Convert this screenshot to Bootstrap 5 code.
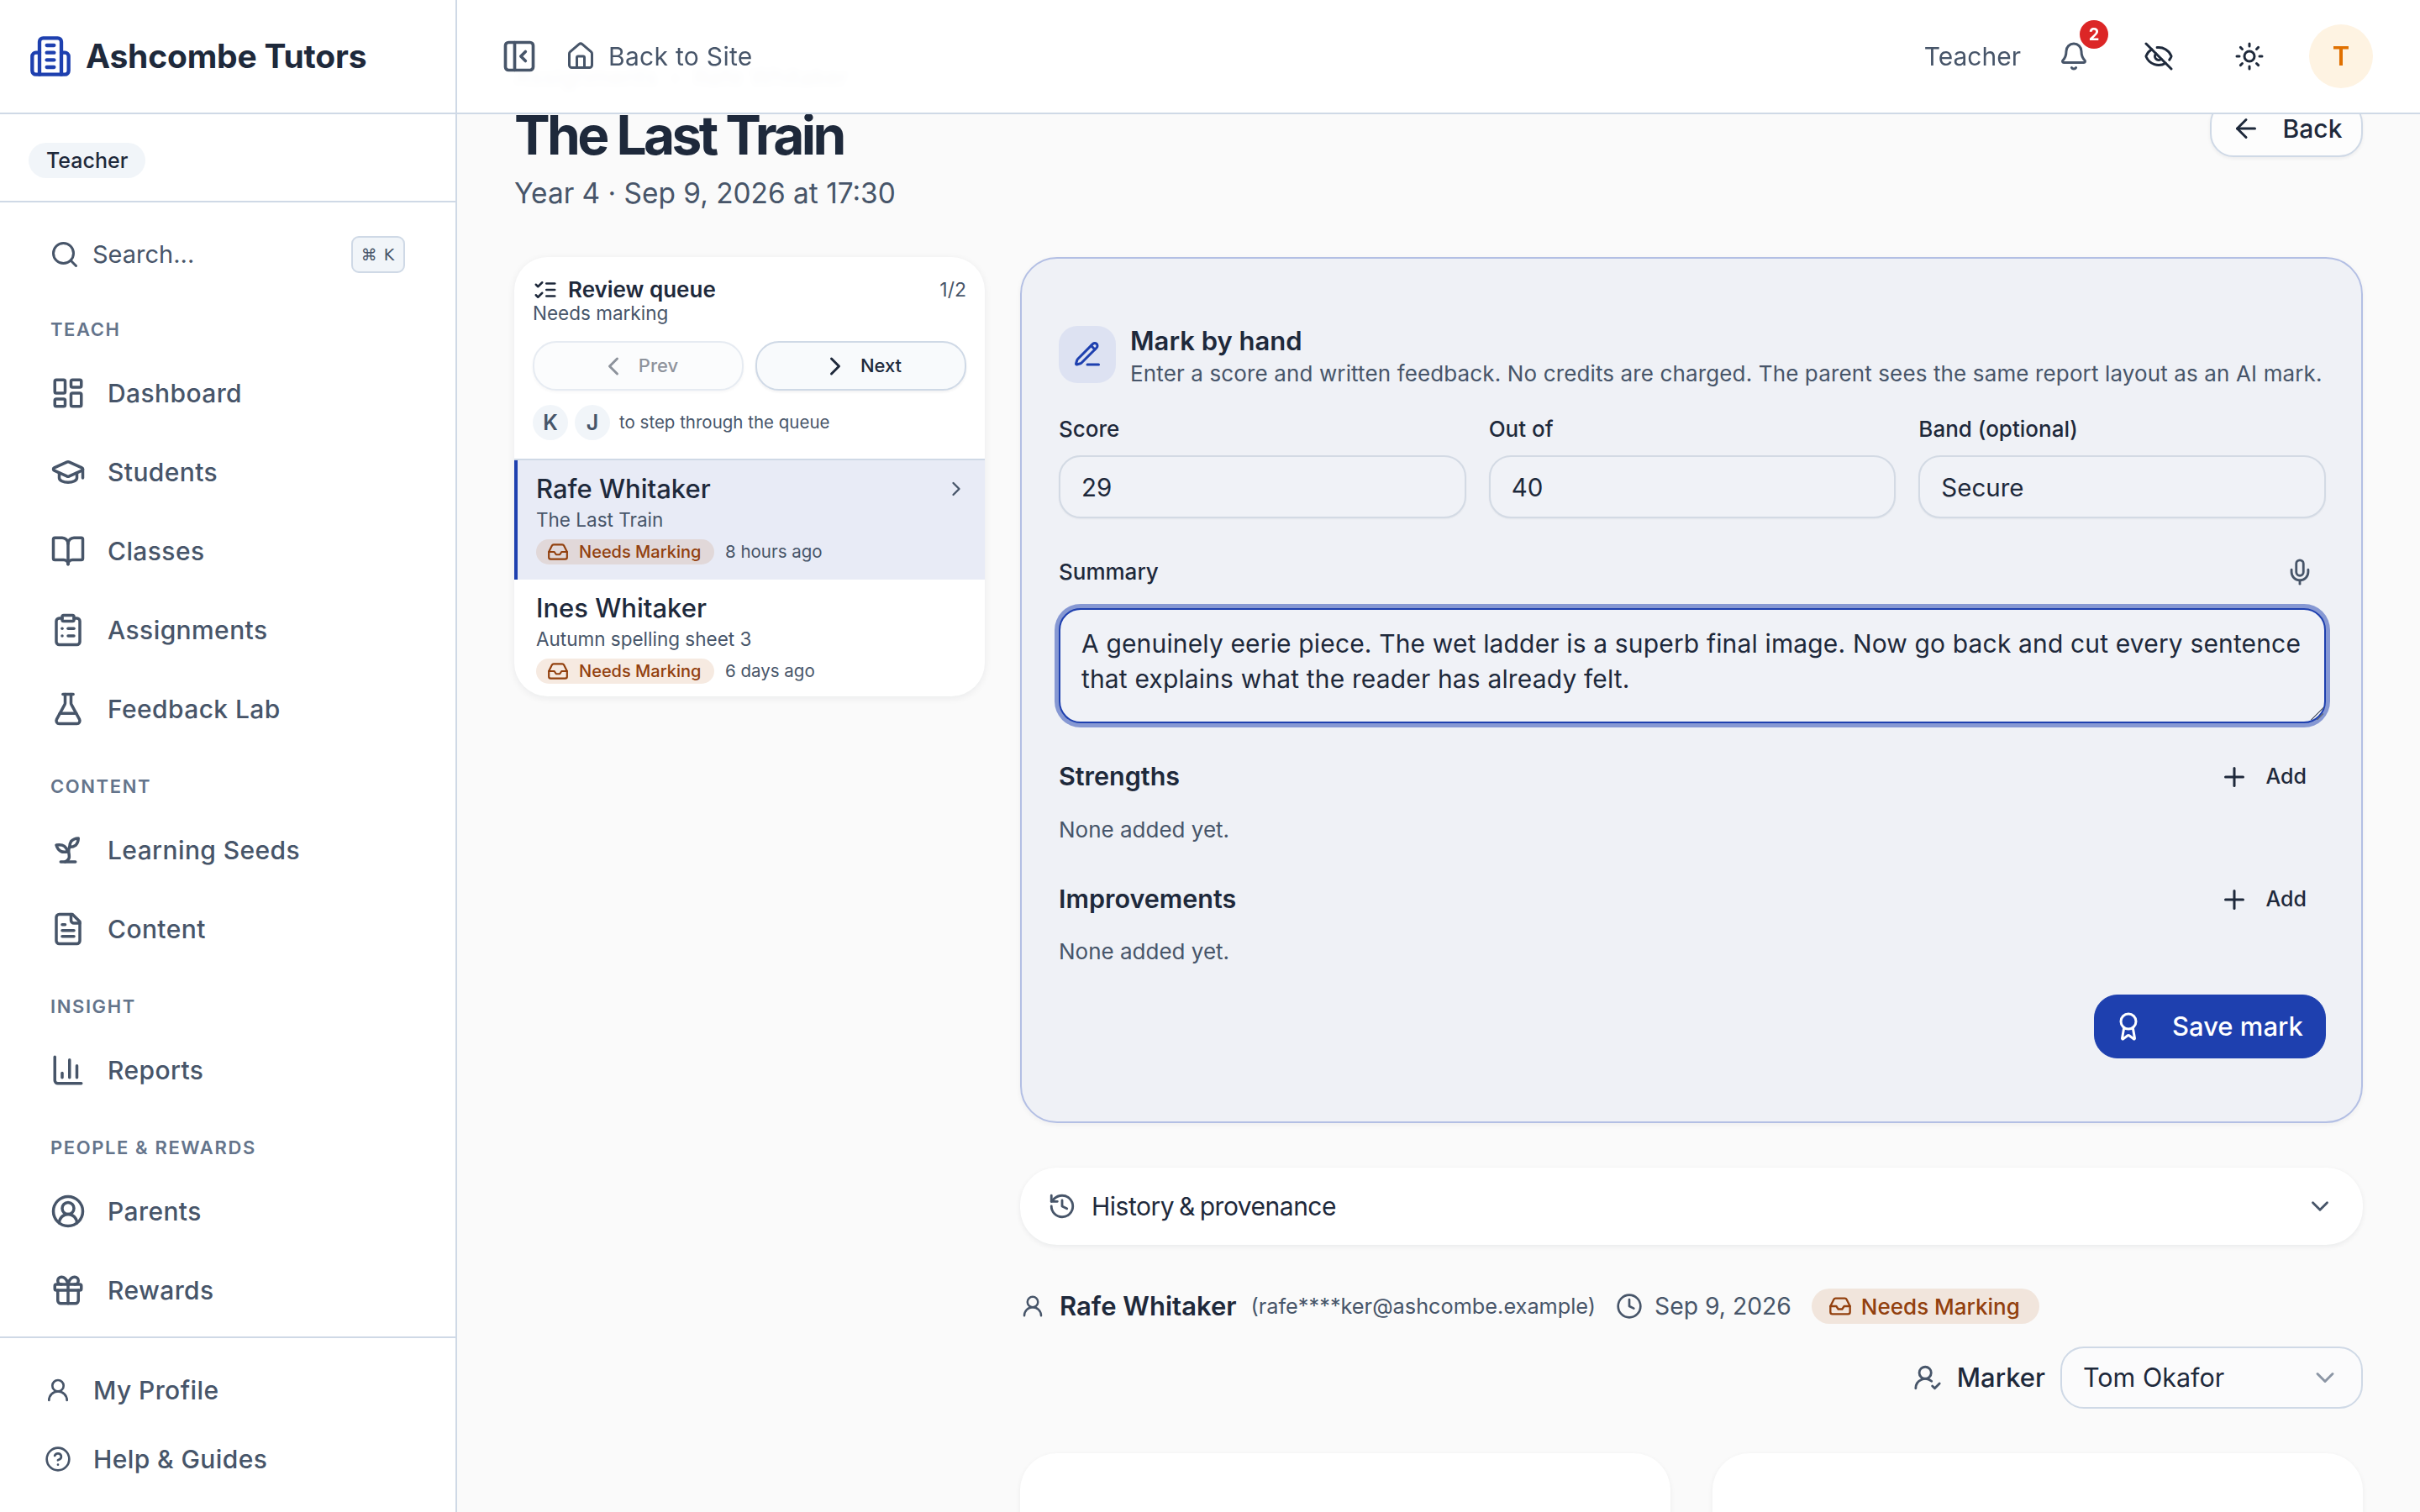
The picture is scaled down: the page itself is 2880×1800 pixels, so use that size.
<!DOCTYPE html>
<html lang="en">
<head>
<meta charset="utf-8">
<title>The Last Train</title>
<link rel="stylesheet" href="https://cdn.jsdelivr.net/npm/bootstrap@5.3.0/dist/css/bootstrap.min.css">
<style>
:root{--ink:#1e293b;--mute:#475569;--line:#cfd9e6;--blue:#1e40af}
html,body{height:1800px;overflow:hidden}
body{font-family:Inter,"Noto Sans",sans-serif;background:#fafafa;color:var(--ink);font-size:32px}
.ic{fill:none;stroke:currentColor;stroke-width:2;stroke-linecap:round;stroke-linejoin:round;flex:none;display:block}
.ax-ic-blue{color:var(--blue)}
.ax-ic-mute{color:var(--mute)}
.ax-shell{height:1800px}
.ax-side{width:544px;flex:none;background:#fff;border-right:2px solid var(--line);height:1800px}
.ax-brand{height:136px;border-bottom:2px solid var(--line);padding-left:34px;gap:16px}
.ax-brand-name{font-size:39px;font-weight:700;letter-spacing:-.2px}
.ax-role-wrap{height:105px;padding:34px 0 0 34px;border-bottom:2px solid var(--line)}
.ax-role{display:block;width:fit-content;height:42px;line-height:42px;padding:0 21px;border-radius:21px;background:#f1f5f9;font-size:25px;font-weight:500;color:var(--ink)}
.ax-scroll{padding-top:20px;height:1352px;border-bottom:2px solid var(--line)}
.ax-search{height:84px;padding-left:59px;padding-right:60px;margin-bottom:18px;color:var(--mute);gap:15px;font-size:29px}
.ax-kbd{width:64px;height:44px;border:2px solid var(--line);border-radius:9px;background:#f1f5f9;font-size:19px;font-family:"DejaVu Sans",sans-serif;line-height:40px;text-align:center;letter-spacing:1px}
.ax-label{height:58px;line-height:58px;padding-left:60px;font-size:22px;font-weight:600;letter-spacing:1.6px;color:#64748b}
.ax-group{margin-top:16px}
.ax-link{height:94px;padding:0 0 0 60px;gap:26px;color:var(--mute);font-size:30px;font-weight:500;letter-spacing:.4px}
.ax-foot{padding-top:21px}
.ax-foot .ax-link{height:82px;padding-left:53px;gap:26px}
.ax-main{min-width:0;height:1800px;overflow:hidden;position:relative}
.ax-top{height:136px;background:rgba(255,255,255,.97);backdrop-filter:blur(4px);border-bottom:2px solid var(--line);padding:0 56px 0 52px;position:relative;z-index:10}
.ax-back-site{color:var(--mute);margin-left:33px;gap:15px;font-size:30px;letter-spacing:.3px;line-height:1}
.ax-top-role{color:var(--mute);font-size:30px;margin-right:45px;line-height:1}
.ax-top-btn{width:36px;height:36px;position:relative}
.ax-top-eye{margin-left:65px}
.ax-top-sun{margin-left:72px}
.ax-notify{position:absolute;left:25px;top:-25px;width:34px;height:34px;border-radius:50%;background:#dc2626;color:#fff;font-size:20px;font-weight:700;line-height:34px;text-align:center}
.ax-avatar{width:76px;height:76px;margin-left:53px;border-radius:50%;background:#fef3e2;color:#e07000;font-size:31px;font-weight:600;line-height:76px;text-align:center}
.ax-page{margin-top:-70px;padding:0 68px}
.ax-crumb{height:53px;padding-top:16px;line-height:20px;font-size:28px;color:var(--mute)}
.ax-title{font-size:64px;line-height:64px;font-weight:700;letter-spacing:-3.6px;margin:10px 0 15px;color:var(--ink)}
.ax-sub{font-size:33.4px;line-height:44px;color:var(--mute)}
.ax-back{height:68px;width:182px;border:2px solid var(--line);border-radius:28px;background:#fdfdfd;color:var(--ink);font-size:30px;font-weight:500;gap:26px;box-shadow:0 2px 4px rgba(15,23,42,.06);padding:0}
.ax-cols{margin-top:54px;gap:42px}
.ax-left{width:560px;flex:none}
.ax-right{min-width:0;flex:1}
.ax-queue{border:0;border-radius:40px;background:#fff;overflow:hidden;box-shadow:0 2px 10px rgba(15,23,42,.07)}
.ax-qhead{padding:23px 22px 22px;border-bottom:2px solid var(--line)}
.ax-qtitle{font-size:26px;font-weight:600;line-height:32px;gap:12px}
.ax-qcount{font-size:23px;line-height:32px;color:var(--mute)}
.ax-qsub{font-size:22.5px;line-height:30px;margin-top:-3px;color:var(--mute)}
.ax-steps{margin-top:18px;gap:14px}
.ax-step{flex:1;height:59px;border-radius:28px;border:2px solid var(--line);background:#f8fafc;color:var(--ink);font-size:22px;font-weight:500;gap:12px;padding:0;box-shadow:0 2px 3px rgba(15,23,42,.06)}
.ax-step.disabled,.ax-step:disabled{opacity:.5;background:#f8fafc;border-color:var(--line);color:var(--ink)}
.ax-keys{margin-top:17px;gap:8px;font-size:20.5px;color:var(--mute)}
.ax-key{width:42px;height:42px;border-radius:50%;background:#f1f5f9;font-size:25px;font-weight:600;line-height:42px;text-align:center;color:var(--mute)}
.ax-keys-txt{margin-left:3px}
.ax-row{padding:14px 26px 15px}
.ax-row.on{background:#e8ebf6;border-left:4px solid var(--blue);padding:14px 20px 18px 22px}
.ax-row-name{font-size:31px;line-height:40px;font-weight:500;color:var(--ink)}
.ax-row-sub{font-size:22.5px;line-height:34px;color:var(--mute)}
.ax-row-meta{margin-top:6px;gap:13px;font-size:20.5px;line-height:30px;color:var(--mute)}
.ax-pill{background:rgba(180,83,9,.12);color:#92400e;border-radius:18px;font-weight:500;display:inline-flex;align-items:center}
.ax-pill-sm{height:30px;width:212px;font-size:20px;padding:0 13px;gap:12px}
.ax-pill-lg{height:42px;font-size:26px;padding:0 23px 0 20px;gap:11px;margin-left:24px;border-radius:21px}
.ax-panel{height:1031px;border:2px solid #b3bfe4;border-radius:44px;background:#eff1f6;padding:80px 42px 0 44px;box-shadow:0 2px 6px rgba(15,23,42,.05)}
.ax-head{gap:17px}
.ax-mark-ic{width:68px;height:68px;border-radius:22px;background:#dde2f2;color:var(--blue);flex:none}
.ax-mark-t{font-size:31px;line-height:36px;font-weight:600}
.ax-mark-s{font-size:26px;line-height:36px;margin-top:3px;letter-spacing:.13px;white-space:nowrap;color:var(--mute)}
.ax-fields{display:grid;grid-template-columns:repeat(3,1fr);gap:0 27px;margin-top:31px}
.ax-lab{display:block;font-size:26px;line-height:34px;font-weight:500;margin:0 0 14px;color:var(--ink)}
.ax-inp{height:75px;border:2px solid #d3dae4;border-radius:26px;background:#f0f2f7;font-size:29.5px;color:var(--ink);padding:0 25px;box-shadow:0 1px 2px rgba(15,23,42,.05)}
.ax-sumhead{margin-top:47px;height:34px;color:var(--ink)}
.ax-sumhead .ax-lab{margin:0}
.ax-mic{margin-right:14px;color:var(--mute)}
.ax-textwrap{position:relative;margin-top:26px}
.ax-textwrap::after{content:"";position:absolute;right:3px;bottom:4px;width:15px;height:15px;background:linear-gradient(135deg,transparent 50%,#6b7280 50%,#6b7280 56%,transparent 56%,transparent 72%,#6b7280 72%,#6b7280 78%,transparent 78%);pointer-events:none}
.ax-text{display:block;width:100%;height:137px;border:2px solid var(--blue);border-radius:26px;background:#f0f2f7;font-size:30px;letter-spacing:.15px;line-height:41.5px;color:var(--ink);padding:20px 10px 0 25px;box-shadow:0 0 0 5px rgba(30,64,175,.5);resize:none;white-space:pre-wrap;outline:0}
.ax-text:focus{border-color:var(--blue);background:#f0f2f7;box-shadow:0 0 0 5px rgba(30,64,175,.5)}
.ax-sect{height:44px;font-size:30.5px;font-weight:600}
.ax-add{gap:20px;font-size:25px;font-weight:500;color:var(--ink);padding:2px 23px 0 0;border:0;background:none}
.ax-none{font-size:26px;line-height:36px;color:var(--mute)}
.ax-s1{margin-top:41px}.ax-n1{margin-top:24px}.ax-s2{margin-top:42px}.ax-n2{margin-top:23px}
.ax-save{margin-top:33px;height:76px;width:276px;margin-left:auto;border-radius:28px;background:var(--blue);border-color:var(--blue);color:#fff;font-size:31px;font-weight:500;padding:0 0 0 22px;gap:34px}
.ax-hist{margin-top:53px;height:92px;border-radius:44px;background:#fff;padding:0 34px 0 33px;box-shadow:0 2px 6px rgba(15,23,42,.07);font-size:30px;color:var(--ink);letter-spacing:-.5px;word-spacing:-2px;gap:18px}
.ax-info{margin-top:52px;height:42px;color:var(--mute)}
.ax-info-name{font-size:31px;font-weight:600;color:var(--ink);margin-left:17px}
.ax-info-mail{font-size:25.3px;margin-left:17px}
.ax-info-clock{margin-left:24px}
.ax-info-date{font-size:28.3px;margin-left:14px}
.ax-mark{margin-top:27px;gap:18px;justify-content:flex-end}
.ax-mark-lab{font-size:31px;font-weight:500;color:var(--ink)}
.ax-sel{width:360px;height:74px;border:2px solid var(--line);border-radius:28px;background-color:#fbfbfc;font-size:30.5px;color:var(--ink);padding:0 60px 0 25px;background-image:url("data:image/svg+xml,%3csvg xmlns='http://www.w3.org/2000/svg' viewBox='0 0 24 24' fill='none' stroke='%238c96a5' stroke-width='2' stroke-linecap='round' stroke-linejoin='round'%3e%3cpath d='m6 9 6 6 6-6'/%3e%3c/svg%3e");background-position:right 25px center;background-size:36px 36px}
.ax-cards{margin-top:53px;gap:50px}
.ax-blank{flex:1;height:200px;border:0;border-radius:44px;background:#fff;box-shadow:0 2px 6px rgba(15,23,42,.06)}
</style>
</head>
<body>
<svg width="0" height="0" class="position-absolute">
<defs>
<symbol id="i-building" viewBox="0 0 24 24"><path d="M6 22V4a2 2 0 0 1 2-2h8a2 2 0 0 1 2 2v18Z"/><path d="M6 10H4a2 2 0 0 0-2 2v8a2 2 0 0 0 2 2h2"/><path d="M18 10h2a2 2 0 0 1 2 2v8a2 2 0 0 1-2 2h-2"/><path d="M10 6h4"/><path d="M10 10h4"/><path d="M10 14h4"/><path d="M10 18h4"/></symbol>
<symbol id="i-panel" viewBox="0 0 24 24"><rect width="18" height="18" x="3" y="3" rx="2"/><path d="M9 3v18"/><path d="m16 15-3-3 3-3"/></symbol>
<symbol id="i-house" viewBox="0 0 24 24"><path d="M15 21v-8a1 1 0 0 0-1-1h-4a1 1 0 0 0-1 1v8"/><path d="M3 10a2 2 0 0 1 .709-1.528l7-5.999a2 2 0 0 1 2.582 0l7 5.999A2 2 0 0 1 21 10v9a2 2 0 0 1-2 2H5a2 2 0 0 1-2-2z"/></symbol>
<symbol id="i-bell" viewBox="0 0 24 24"><path d="M10.268 21a2 2 0 0 0 3.464 0"/><path d="M3.262 15.326A1 1 0 0 0 4 17h16a1 1 0 0 0 .74-1.673C19.41 13.956 18 12.499 18 8A6 6 0 0 0 6 8c0 4.499-1.411 5.956-2.738 7.326"/></symbol>
<symbol id="i-eyeoff" viewBox="0 0 24 24"><path d="M10.733 5.076a10.744 10.744 0 0 1 11.205 6.575 1 1 0 0 1 0 .696 10.747 10.747 0 0 1-1.444 2.49"/><path d="M14.084 14.158a3 3 0 0 1-4.242-4.242"/><path d="M17.479 17.499a10.75 10.75 0 0 1-15.417-5.151 1 1 0 0 1 0-.696 10.75 10.75 0 0 1 4.446-5.143"/><path d="m2 2 20 20"/></symbol>
<symbol id="i-sun" viewBox="0 0 24 24"><circle cx="12" cy="12" r="4"/><path d="M12 2v2"/><path d="M12 20v2"/><path d="m4.93 4.93 1.41 1.41"/><path d="m17.66 17.66 1.41 1.41"/><path d="M2 12h2"/><path d="M20 12h2"/><path d="m6.34 17.66-1.41 1.41"/><path d="m19.07 4.93-1.41 1.41"/></symbol>
<symbol id="i-search" viewBox="0 0 24 24"><circle cx="11" cy="11" r="8"/><path d="m21 21-4.3-4.3"/></symbol>
<symbol id="i-dash" viewBox="0 0 24 24"><rect width="7" height="9" x="3" y="3" rx="1"/><rect width="7" height="5" x="14" y="3" rx="1"/><rect width="7" height="9" x="14" y="12" rx="1"/><rect width="7" height="5" x="3" y="16" rx="1"/></symbol>
<symbol id="i-cap" viewBox="0 0 24 24"><path d="M21.42 10.922a1 1 0 0 0-.019-1.838L12.83 5.18a2 2 0 0 0-1.66 0L2.6 9.08a1 1 0 0 0 0 1.832l8.57 3.908a2 2 0 0 0 1.66 0z"/><path d="M22 10v6"/><path d="M6 12.5V16a6 3 0 0 0 12 0v-3.5"/></symbol>
<symbol id="i-book" viewBox="0 0 24 24"><path d="M12 7v14"/><path d="M3 18a1 1 0 0 1-1-1V4a1 1 0 0 1 1-1h5a4 4 0 0 1 4 4 4 4 0 0 1 4-4h5a1 1 0 0 1 1 1v13a1 1 0 0 1-1 1h-6a3 3 0 0 0-3 3 3 3 0 0 0-3-3z"/></symbol>
<symbol id="i-clip" viewBox="0 0 24 24"><rect width="8" height="4" x="8" y="2" rx="1"/><path d="M16 4h2a2 2 0 0 1 2 2v14a2 2 0 0 1-2 2H6a2 2 0 0 1-2-2V6a2 2 0 0 1 2-2h2"/><path d="M12 11h4"/><path d="M12 16h4"/><path d="M8 11h.01"/><path d="M8 16h.01"/></symbol>
<symbol id="i-flask" viewBox="0 0 24 24"><path d="M14 2v6a2 2 0 0 0 .245.96l5.51 10.08A2 2 0 0 1 18 22H6a2 2 0 0 1-1.755-2.96l5.51-10.08A2 2 0 0 0 10 8V2"/><path d="M6.453 15h11.094"/><path d="M8.5 2h7"/></symbol>
<symbol id="i-sprout" viewBox="0 0 24 24"><path d="M7 20h10"/><path d="M10 20c5.5-2.5.8-6.4 3-10"/><path d="M9.5 9.4c1.1.8 1.8 2.2 2.3 3.7-2 .4-3.5.4-4.8-.3-1.2-.6-2.3-1.9-3-4.2 2.8-.5 4.4 0 5.5.8z"/><path d="M14.1 6a7 7 0 0 0-1.1 4c1.9-.1 3.3-.6 4.3-1.4 1-1 1.6-2.3 1.7-4.6-2.7.1-4 1-4.9 2z"/></symbol>
<symbol id="i-file" viewBox="0 0 24 24"><path d="M15 2H6a2 2 0 0 0-2 2v16a2 2 0 0 0 2 2h12a2 2 0 0 0 2-2V7Z"/><path d="M14 2v4a2 2 0 0 0 2 2h4"/><path d="M10 9H8"/><path d="M16 13H8"/><path d="M16 17H8"/></symbol>
<symbol id="i-chart" viewBox="0 0 24 24"><path d="M3 3v16a2 2 0 0 0 2 2h16"/><path d="M18 17V9"/><path d="M13 17V5"/><path d="M8 17v-3"/></symbol>
<symbol id="i-cuser" viewBox="0 0 24 24"><path d="M18 20a6 6 0 0 0-12 0"/><circle cx="12" cy="10" r="4"/><circle cx="12" cy="12" r="10"/></symbol>
<symbol id="i-gift" viewBox="0 0 24 24"><rect x="3" y="8" width="18" height="4" rx="1"/><path d="M12 8v13"/><path d="M19 12v7a2 2 0 0 1-2 2H7a2 2 0 0 1-2-2v-7"/><path d="M7.5 8a2.5 2.5 0 0 1 0-5A4.8 8 0 0 1 12 8a4.8 8 0 0 1 4.5-5 2.5 2.5 0 0 1 0 5"/></symbol>
<symbol id="i-user" viewBox="0 0 24 24"><circle cx="12" cy="8" r="5"/><path d="M20 21a8 8 0 0 0-16 0"/></symbol>
<symbol id="i-help" viewBox="0 0 24 24"><circle cx="12" cy="12" r="10"/><path d="M9.09 9a3 3 0 0 1 5.83 1c0 2-3 3-3 3"/><path d="M12 17h.01"/></symbol>
<symbol id="i-list" viewBox="0 0 24 24"><path d="m3 17 2 2 4-4"/><path d="m3 7 2 2 4-4"/><path d="M13 6h8"/><path d="M13 12h8"/><path d="M13 18h8"/></symbol>
<symbol id="i-left" viewBox="0 0 24 24"><path d="m15 18-6-6 6-6"/></symbol>
<symbol id="i-right" viewBox="0 0 24 24"><path d="m9 18 6-6-6-6"/></symbol>
<symbol id="i-down" viewBox="0 0 24 24"><path d="m6 9 6 6 6-6"/></symbol>
<symbol id="i-inbox" viewBox="0 0 24 24"><polyline points="22 12 16 12 14 15 10 15 8 12 2 12"/><path d="M5.45 5.11 2 12v6a2 2 0 0 0 2 2h16a2 2 0 0 0 2-2v-6l-3.45-6.89A2 2 0 0 0 16.76 4H7.24a2 2 0 0 0-1.79 1.11z"/></symbol>
<symbol id="i-pencil" viewBox="0 0 24 24"><path d="M12 20h9"/><path d="M16.376 3.622a1 1 0 0 1 3.002 3.002L7.368 18.635a2 2 0 0 1-.855.506l-2.872.838a.5.5 0 0 1-.62-.62l.838-2.872a2 2 0 0 1 .506-.854z"/><path d="m15 5 3 3"/></symbol>
<symbol id="i-mic" viewBox="0 0 24 24"><path d="M12 19v3"/><path d="M19 10v2a7 7 0 0 1-14 0v-2"/><rect x="9" y="2" width="6" height="13" rx="3"/></symbol>
<symbol id="i-plus" viewBox="0 0 24 24"><path d="M5 12h14"/><path d="M12 5v14"/></symbol>
<symbol id="i-award" viewBox="0 0 24 24"><path d="m15.477 12.89 1.515 8.526a.5.5 0 0 1-.81.47l-3.58-2.687a1 1 0 0 0-1.197 0l-3.586 2.686a.5.5 0 0 1-.81-.469l1.514-8.526"/><circle cx="12" cy="8" r="6"/></symbol>
<symbol id="i-history" viewBox="0 0 24 24"><path d="M3 12a9 9 0 1 0 9-9 9.75 9.75 0 0 0-6.74 2.74L3 8"/><path d="M3 3v5h5"/><path d="M12 7v5l4 2"/></symbol>
<symbol id="i-clock" viewBox="0 0 24 24"><circle cx="12" cy="12" r="10"/><path d="M12 6v6l4 2"/></symbol>
<symbol id="i-ucheck" viewBox="0 0 24 24"><path d="M2 21a8 8 0 0 1 13.292-6"/><circle cx="10" cy="8" r="5"/><path d="m16 19 2 2 4-4"/></symbol>
<symbol id="i-arrow" viewBox="0 0 24 24"><path d="m12 19-7-7 7-7"/><path d="M19 12H5"/></symbol>
</defs>
</svg>

<div class="ax-shell d-flex">
  <aside class="ax-side d-flex flex-column">
    <div class="ax-brand d-flex align-items-center">
      <svg class="ic ax-ic-blue" width="52" height="52"><use href="#i-building"/></svg>
      <span class="ax-brand-name">Ashcombe Tutors</span>
    </div>
    <div class="ax-role-wrap"><span class="ax-role">Teacher</span></div>
    <div class="ax-scroll">
      <div class="ax-search d-flex align-items-center">
        <svg class="ic" width="36" height="36"><use href="#i-search"/></svg>
        <span class="flex-grow-1">Search...</span>
        <span class="ax-kbd">⌘ K</span>
      </div>
      <div class="ax-label">TEACH</div>
      <nav class="nav flex-column">
        <a class="nav-link ax-link d-flex align-items-center" href="#"><svg class="ic" width="42" height="42"><use href="#i-dash"/></svg>Dashboard</a>
        <a class="nav-link ax-link d-flex align-items-center" href="#"><svg class="ic" width="42" height="42"><use href="#i-cap"/></svg>Students</a>
        <a class="nav-link ax-link d-flex align-items-center" href="#"><svg class="ic" width="42" height="42"><use href="#i-book"/></svg>Classes</a>
        <a class="nav-link ax-link d-flex align-items-center" href="#"><svg class="ic" width="42" height="42"><use href="#i-clip"/></svg>Assignments</a>
        <a class="nav-link ax-link d-flex align-items-center" href="#"><svg class="ic" width="42" height="42"><use href="#i-flask"/></svg>Feedback Lab</a>
      </nav>
      <div class="ax-group">
        <div class="ax-label">CONTENT</div>
        <nav class="nav flex-column">
          <a class="nav-link ax-link d-flex align-items-center" href="#"><svg class="ic" width="42" height="42"><use href="#i-sprout"/></svg>Learning Seeds</a>
          <a class="nav-link ax-link d-flex align-items-center" href="#"><svg class="ic" width="42" height="42"><use href="#i-file"/></svg>Content</a>
        </nav>
      </div>
      <div class="ax-group">
        <div class="ax-label">INSIGHT</div>
        <nav class="nav flex-column">
          <a class="nav-link ax-link d-flex align-items-center" href="#"><svg class="ic" width="42" height="42"><use href="#i-chart"/></svg>Reports</a>
        </nav>
      </div>
      <div class="ax-group">
        <div class="ax-label">PEOPLE &amp; REWARDS</div>
        <nav class="nav flex-column">
          <a class="nav-link ax-link d-flex align-items-center" href="#"><svg class="ic" width="42" height="42"><use href="#i-cuser"/></svg>Parents</a>
          <a class="nav-link ax-link d-flex align-items-center" href="#"><svg class="ic" width="42" height="42"><use href="#i-gift"/></svg>Rewards</a>
        </nav>
      </div>
    </div>
    <nav class="ax-foot nav flex-column">
      <a class="nav-link ax-link d-flex align-items-center" href="#"><svg class="ic" width="32" height="32"><use href="#i-user"/></svg>My Profile</a>
      <a class="nav-link ax-link d-flex align-items-center" href="#"><svg class="ic" width="32" height="32"><use href="#i-help"/></svg>Help &amp; Guides</a>
    </nav>
  </aside>

  <div class="ax-main flex-grow-1">
    <header class="ax-top d-flex align-items-center">
      <svg class="ic ax-ic-mute" width="44" height="44"><use href="#i-panel"/></svg>
      <a class="ax-back-site d-flex align-items-center text-decoration-none" href="#"><svg class="ic" width="36" height="36"><use href="#i-house"/></svg>Back to Site</a>
      <div class="ms-auto d-flex align-items-center">
        <span class="ax-top-role">Teacher</span>
        <div class="ax-top-btn ax-ic-mute"><svg class="ic" width="36" height="36"><use href="#i-bell"/></svg><span class="ax-notify">2</span></div>
        <div class="ax-top-btn ax-top-eye"><svg class="ic" width="36" height="36"><use href="#i-eyeoff"/></svg></div>
        <div class="ax-top-btn ax-top-sun"><svg class="ic" width="36" height="36"><use href="#i-sun"/></svg></div>
        <div class="ax-avatar">T</div>
      </div>
    </header>

    <main class="ax-page">
      <div class="ax-crumb">Assignments &nbsp;›&nbsp; Rafe Whitaker</div>
      <div class="d-flex justify-content-between align-items-start">
        <div>
          <h1 class="ax-title">The Last Train</h1>
          <div class="ax-sub">Year 4 · Sep 9, 2026 at 17:30</div>
        </div>
        <button class="btn ax-back d-flex align-items-center justify-content-center"><svg class="ic" width="36" height="36"><use href="#i-arrow"/></svg>Back</button>
      </div>

      <div class="ax-cols d-flex align-items-start">
        <div class="ax-left">
          <div class="card ax-queue">
            <div class="ax-qhead">
              <div class="d-flex justify-content-between align-items-center">
                <div class="ax-qtitle d-flex align-items-center"><svg class="ic" width="30" height="30"><use href="#i-list"/></svg>Review queue</div>
                <span class="ax-qcount">1/2</span>
              </div>
              <div class="ax-qsub">Needs marking</div>
              <div class="ax-steps d-flex">
                <button class="btn ax-step d-flex align-items-center justify-content-center" disabled><svg class="ic" width="36" height="36"><use href="#i-left"/></svg>Prev</button>
                <button class="btn ax-step d-flex align-items-center justify-content-center"><svg class="ic" width="36" height="36"><use href="#i-right"/></svg>Next</button>
              </div>
              <div class="ax-keys d-flex align-items-center">
                <span class="ax-key">K</span><span class="ax-key">J</span><span class="ax-keys-txt">to step through the queue</span>
              </div>
            </div>
            <div class="ax-row on position-relative">
              <div class="d-flex justify-content-between align-items-center">
                <div class="ax-row-name">Rafe Whitaker</div>
                <svg class="ic ax-ic-mute" width="28" height="28"><use href="#i-right"/></svg>
              </div>
              <div class="ax-row-sub">The Last Train</div>
              <div class="ax-row-meta d-flex align-items-center">
                <span class="ax-pill ax-pill-sm"><svg class="ic" width="26" height="26"><use href="#i-inbox"/></svg>Needs Marking</span><span>8 hours ago</span>
              </div>
            </div>
            <div class="ax-row">
              <div class="ax-row-name">Ines Whitaker</div>
              <div class="ax-row-sub">Autumn spelling sheet 3</div>
              <div class="ax-row-meta d-flex align-items-center">
                <span class="ax-pill ax-pill-sm"><svg class="ic" width="26" height="26"><use href="#i-inbox"/></svg>Needs Marking</span><span>6 days ago</span>
              </div>
            </div>
          </div>
        </div>

        <div class="ax-right">
          <form class="ax-panel">
            <div class="ax-head d-flex align-items-start">
              <span class="ax-mark-ic d-flex align-items-center justify-content-center"><svg class="ic" width="36" height="36"><use href="#i-pencil"/></svg></span>
              <div>
                <div class="ax-mark-t">Mark by hand</div>
                <div class="ax-mark-s">Enter a score and written feedback. No credits are charged. The parent sees the same report layout as an AI mark.</div>
              </div>
            </div>
            <div class="ax-fields">
              <div><label class="form-label ax-lab">Score</label><input class="form-control ax-inp" value="29"></div>
              <div><label class="form-label ax-lab">Out of</label><input class="form-control ax-inp" value="40"></div>
              <div><label class="form-label ax-lab">Band (optional)</label><input class="form-control ax-inp" value="Secure"></div>
            </div>
            <div class="ax-sumhead d-flex justify-content-between align-items-center">
              <label class="form-label ax-lab">Summary</label>
              <svg class="ic ax-mic" width="34" height="34"><use href="#i-mic"/></svg>
            </div>
            <div class="ax-textwrap">
              <textarea class="form-control ax-text">A genuinely eerie piece. The wet ladder is a superb final image. Now go back and cut every sentence
that explains what the reader has already felt.</textarea>
            </div>
            <div class="ax-sect ax-s1 d-flex justify-content-between align-items-center">
              <span>Strengths</span>
              <button type="button" class="btn ax-add d-flex align-items-center"><svg class="ic" width="36" height="36"><use href="#i-plus"/></svg>Add</button>
            </div>
            <div class="ax-none ax-n1">None added yet.</div>
            <div class="ax-sect ax-s2 d-flex justify-content-between align-items-center">
              <span>Improvements</span>
              <button type="button" class="btn ax-add d-flex align-items-center"><svg class="ic" width="36" height="36"><use href="#i-plus"/></svg>Add</button>
            </div>
            <div class="ax-none ax-n2">None added yet.</div>
            <button type="button" class="btn btn-primary ax-save d-flex align-items-center"><svg class="ic" width="36" height="36"><use href="#i-award"/></svg>Save mark</button>
          </form>

          <div class="ax-hist d-flex align-items-center">
            <svg class="ic ax-ic-mute" width="34" height="34"><use href="#i-history"/></svg>
            <span class="flex-grow-1">History &amp; provenance</span>
            <svg class="ic ax-ic-mute" width="34" height="34"><use href="#i-down"/></svg>
          </div>

          <div class="ax-info d-flex align-items-center">
            <svg class="ic" width="30" height="30"><use href="#i-user"/></svg>
            <span class="ax-info-name">Rafe Whitaker</span>
            <span class="ax-info-mail">(rafe****ker@ashcombe.example)</span>
            <svg class="ic ax-info-clock" width="32" height="32"><use href="#i-clock"/></svg>
            <span class="ax-info-date">Sep 9, 2026</span>
            <span class="ax-pill ax-pill-lg"><svg class="ic" width="28" height="28"><use href="#i-inbox"/></svg>Needs Marking</span>
          </div>

          <div class="ax-mark d-flex align-items-center">
            <svg class="ic ax-ic-mute" width="34" height="34"><use href="#i-ucheck"/></svg>
            <span class="ax-mark-lab">Marker</span>
            <select class="form-select ax-sel"><option>Tom Okafor</option></select>
          </div>

          <div class="ax-cards d-flex">
            <div class="card ax-blank"></div>
            <div class="card ax-blank"></div>
          </div>
        </div>
      </div>
    </main>
  </div>
</div>
<script src="https://cdn.jsdelivr.net/npm/bootstrap@5.3.0/dist/js/bootstrap.bundle.min.js"></script>
</body>
</html>
